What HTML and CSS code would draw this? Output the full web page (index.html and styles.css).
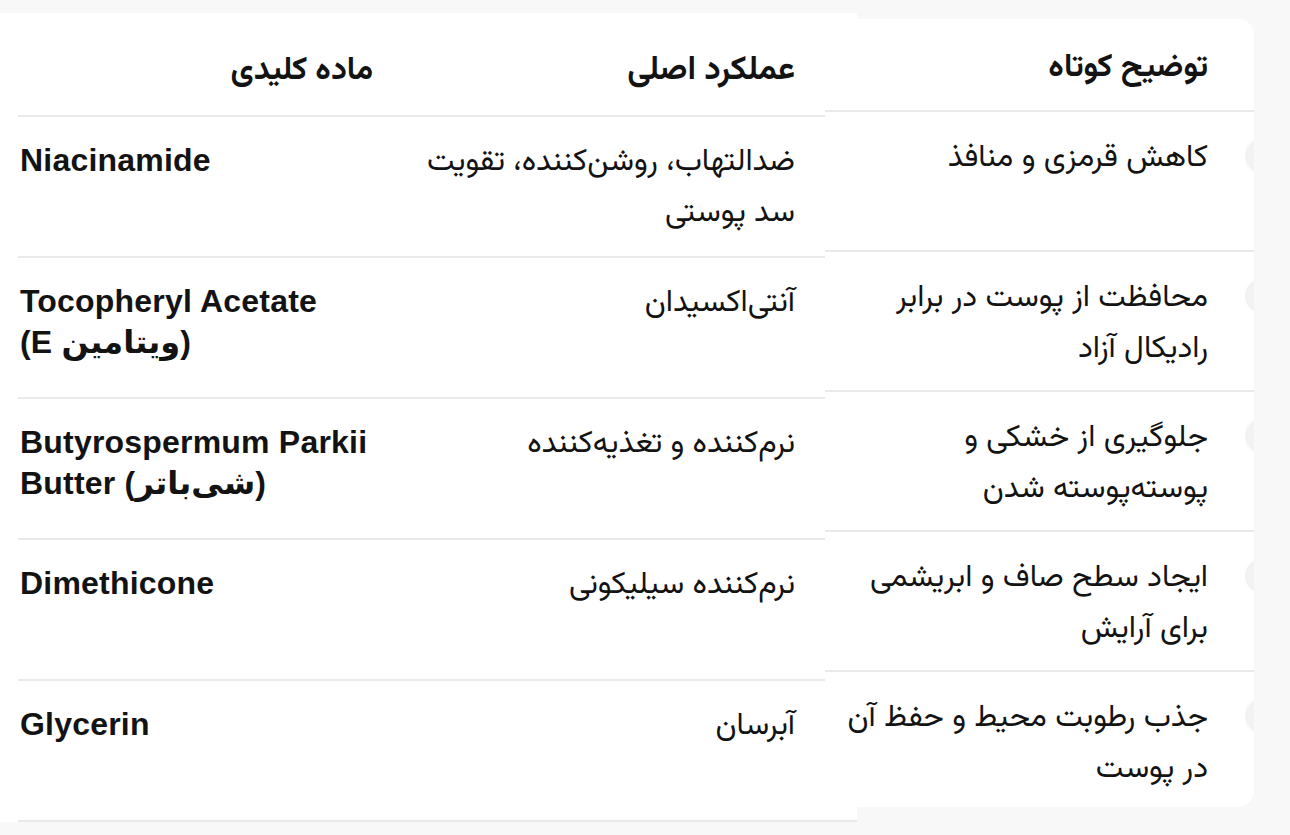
FILE: index.html
```html
<!DOCTYPE html>
<html lang="fa">
<head>
<meta charset="utf-8">
<title>مواد کلیدی</title>
<link rel="stylesheet" href="styles.css">
</head>
<body>
<div class="page">
  <section class="card-main">
    <div class="row head">
      <div class="cell key" dir="rtl">ماده کلیدی</div>
      <div class="cell func" dir="rtl">عملکرد اصلی</div>
    </div>
    <div class="row">
      <div class="cell key en" dir="ltr">Niacinamide</div>
      <div class="cell func" dir="rtl">ضدالتهاب، روشن‌کننده، تقویت سد پوستی</div>
    </div>
    <div class="row">
      <div class="cell key en" dir="ltr">Tocopheryl Acetate (E&nbsp;ویتامین)</div>
      <div class="cell func" dir="rtl">آنتی‌اکسیدان</div>
    </div>
    <div class="row">
      <div class="cell key en" dir="ltr">Butyrospermum Parkii Butter (شی‌باتر)</div>
      <div class="cell func" dir="rtl">نرم‌کننده و تغذیه‌کننده</div>
    </div>
    <div class="row">
      <div class="cell key en" dir="ltr">Dimethicone</div>
      <div class="cell func" dir="rtl">نرم‌کننده سیلیکونی</div>
    </div>
    <div class="row">
      <div class="cell key en" dir="ltr">Glycerin</div>
      <div class="cell func" dir="rtl">آبرسان</div>
    </div>
  </section>
  <section class="card-desc" dir="rtl">
    <div class="drow dhead">توضیح کوتاه</div>
    <div class="drow"><span class="dot"></span><p class="dtext">کاهش قرمزی و منافذ</p></div>
    <div class="drow"><span class="dot"></span><p class="dtext">محافظت از پوست در برابر رادیکال آزاد</p></div>
    <div class="drow"><span class="dot"></span><p class="dtext">جلوگیری از خشکی و پوسته‌پوسته شدن</p></div>
    <div class="drow"><span class="dot"></span><p class="dtext">ایجاد سطح صاف و ابریشمی برای آرایش</p></div>
    <div class="drow last"><span class="dot"></span><p class="dtext">جذب رطوبت محیط و حفظ آن در پوست</p></div>
  </section>
</div>
</body>
</html>
```

FILE: styles.css
```css
html, body {
  margin: 0;
  padding: 0;
  background: #f8f8f8;
}

body {
  width: 1290px;
  height: 835px;
  overflow: hidden;
  font-family: "Vazirmatn", "Noto Sans Arabic", "DejaVu Sans", sans-serif;
  color: #131313;
}

.page {
  display: flex;
  align-items: flex-start;
  padding-top: 13px;
}

.card-main {
  width: 839px;
  padding-left: 18px;
  background: #ffffff;
  flex: none;
}

.row {
  display: grid;
  grid-template-columns: 359px 480px;
  min-height: 139px;
  border-bottom: 2px solid #e9e9e9;
  align-items: start;
}

.row.head {
  min-height: 102px;
}

.cell {
  box-sizing: border-box;
}

.key {
  padding: 0 4px 0 2px;
}

.func {
  padding: 20px 62px 0 36px;
  font-size: 31px;
  line-height: 51px;
  text-align: right;
}

.head .cell {
  padding-top: 38px;
  font-size: 32px;
  font-weight: 700;
  line-height: 40px;
  text-align: right;
}

.head .func {
  font-size: 33px;
}

.head .key {
  padding-right: 4px;
}

.en {
  padding-top: 23px;
  font-family: "Liberation Sans", "DejaVu Sans", sans-serif;
  font-weight: 700;
  font-size: 32px;
  line-height: 41px;
  text-align: left;
  letter-spacing: 0.2px;
}

.card-desc {
  width: 429px;
  margin-top: 6px;
  margin-left: -32px;
  background: #ffffff;
  border-radius: 16px;
  overflow: hidden;
  flex: none;
}

.drow {
  position: relative;
  box-sizing: border-box;
  min-height: 140px;
  padding: 21px 46px 0 6px;
  border-bottom: 2px solid #e9e9e9;
}

.drow.dhead {
  min-height: 93px;
  padding-top: 29px;
  font-size: 32px;
  font-weight: 700;
  line-height: 40px;
}

.drow.last {
  min-height: 135px;
  border-bottom: none;
}

.dtext {
  margin: 0;
  font-size: 31px;
  line-height: 51px;
}

.dot {
  position: absolute;
  top: 26px;
  right: -27px;
  width: 36px;
  height: 36px;
  border-radius: 50%;
  background: #f2f2f2;
}
```
